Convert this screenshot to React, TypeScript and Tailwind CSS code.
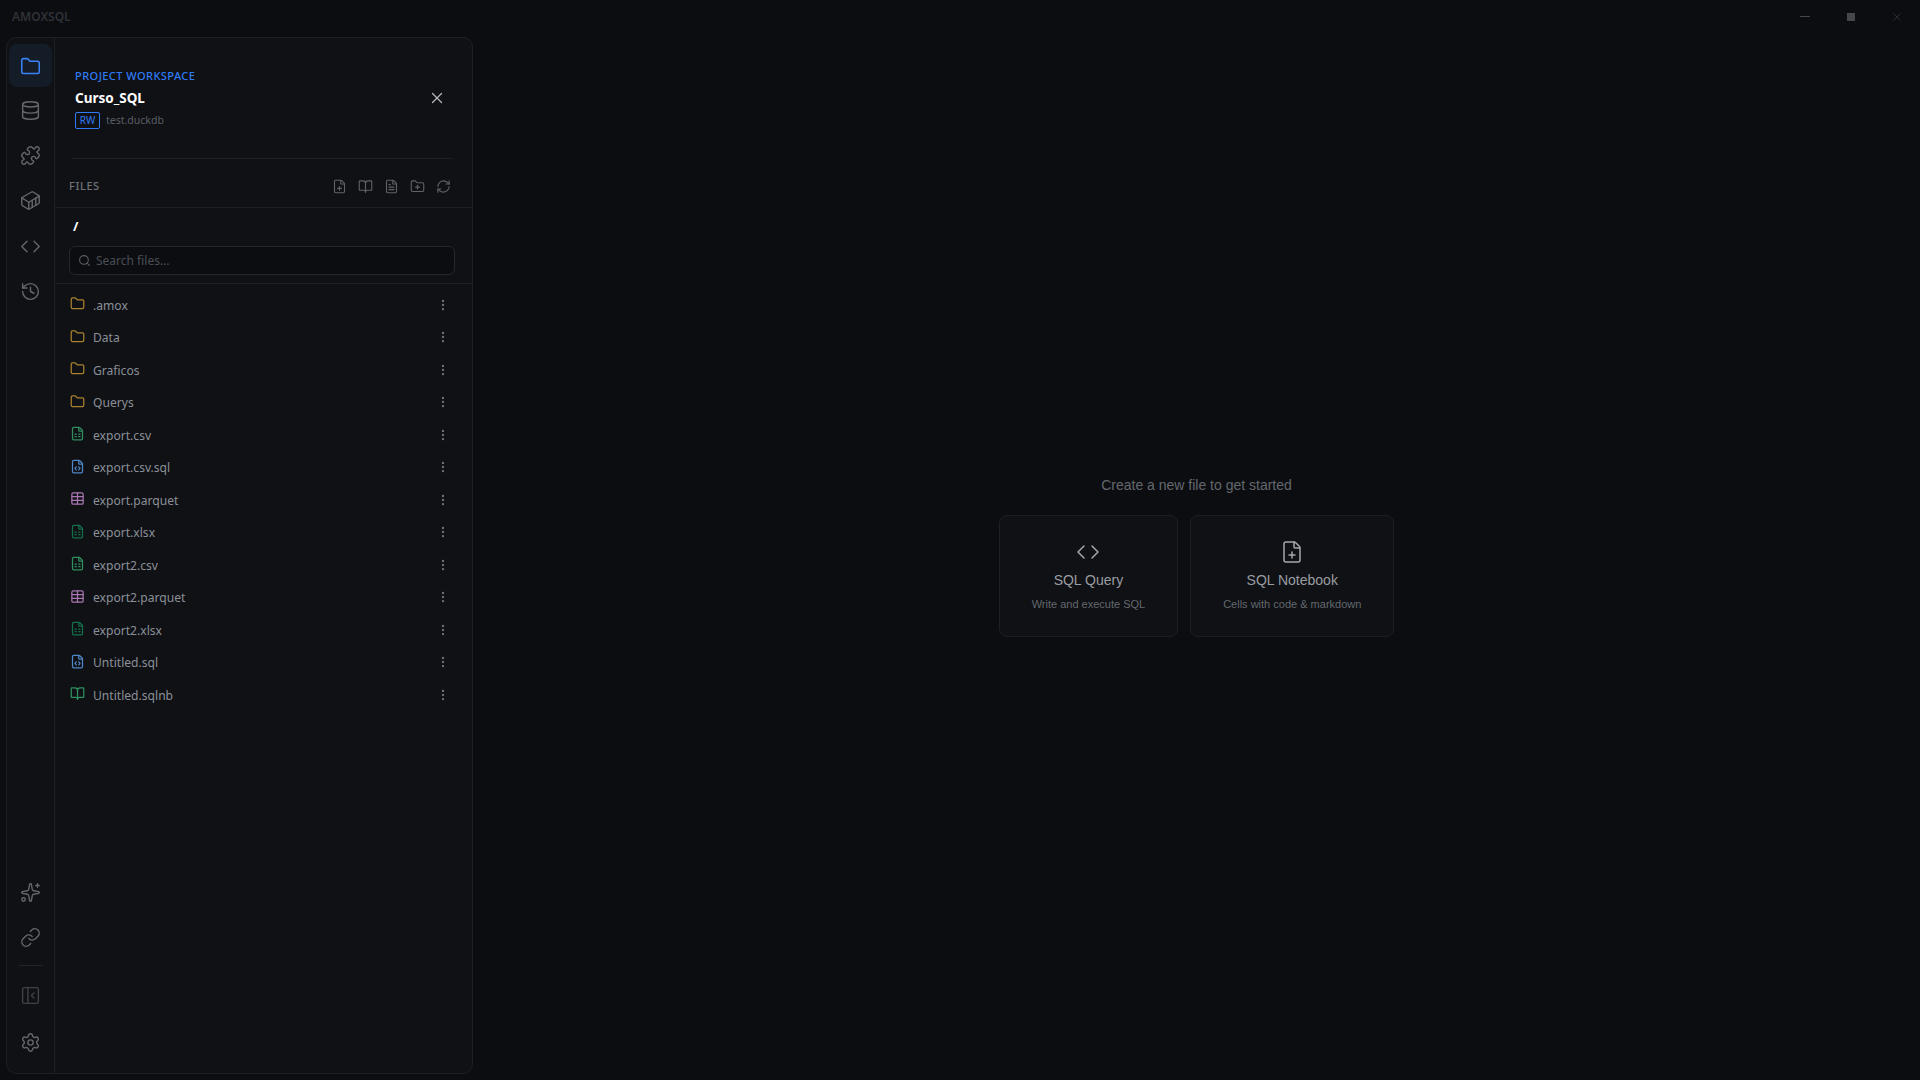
import React from 'react';
import {
  BookOpen,
  Code,
  Container,
  Database,
  FileCode,
  FilePlus,
  FileSpreadsheet,
  FileText,
  Folder,
  FolderPlus,
  History,
  Link,
  MoreVertical,
  PanelLeftClose,
  Puzzle,
  RefreshCw,
  Search,
  Settings,
  Sparkles,
  Table,
  X
} from 'lucide-react';

const files = [
  { name: '.amox', icon: Folder, color: 'text-[#a9812f]' },
  { name: 'Data', icon: Folder, color: 'text-[#a9812f]' },
  { name: 'Graficos', icon: Folder, color: 'text-[#a9812f]' },
  { name: 'Querys', icon: Folder, color: 'text-[#a9812f]' },
  { name: 'export.csv', icon: FileSpreadsheet, color: 'text-[#2f8f5f]' },
  { name: 'export.csv.sql', icon: FileCode, color: 'text-[#4f86c6]' },
  { name: 'export.parquet', icon: Table, color: 'text-[#a876b0]' },
  { name: 'export.xlsx', icon: FileSpreadsheet, color: 'text-[#14704a]' },
  { name: 'export2.csv', icon: FileSpreadsheet, color: 'text-[#2f8f5f]' },
  { name: 'export2.parquet', icon: Table, color: 'text-[#a876b0]' },
  { name: 'export2.xlsx', icon: FileSpreadsheet, color: 'text-[#14704a]' },
  { name: 'Untitled.sql', icon: FileCode, color: 'text-[#4f86c6]' },
  { name: 'Untitled.sqlnb', icon: BookOpen, color: 'text-[#2f8f5f]' }
];

const topRail = [Database, Puzzle, Container, Code, History];

export default function App() {
  return (
    <div className="flex h-[1080px] w-[1920px] flex-col overflow-hidden bg-[#0b0d11] font-['Noto_Sans',sans-serif] text-[#8b9098]">
      {/* Title bar */}
      <div className="flex h-[37px] shrink-0 items-center justify-between pb-[4px] pl-3">
        <span className="text-xs font-semibold text-[#2f3237]">AMOXSQL</span>
        <div className="flex items-center">
          <span className="flex w-[46px] justify-center"><span className="h-px w-[10px] bg-[#44474c]" /></span>
          <span className="flex w-[46px] justify-center"><span className="h-2 w-2 bg-[#44474c]" /></span>
          <span className="flex w-[46px] justify-center text-[#44474c]"><X size={14} strokeWidth={1} /></span>
        </div>
      </div>

      <div className="flex min-h-0 flex-1 pb-[6px] pl-[6px]">
        {/* Left panel */}
        <aside className="flex w-[467px] shrink-0 rounded-[10px] border border-[#1c1f24] bg-[#0f1115]">
          {/* Icon rail */}
          <div className="flex w-[48px] shrink-0 flex-col items-center border-r border-[#1c1f24] pt-[6px] pb-[8px] text-[#64686d]">
            <button className="flex h-[43px] w-[43px] items-center justify-center rounded-lg bg-[#141c28] pt-px text-[#3b82f6]">
              <Folder size={21} strokeWidth={1.75} />
            </button>
            <div className="mt-[1px] flex flex-col items-center">
              {topRail.map((Icon, idx) =>
                <button key={idx} className="flex h-[45.2px] w-[43px] items-center justify-center">
                  <Icon size={21} strokeWidth={1.6} />
                </button>
              )}
            </div>
            <div className="mt-auto flex flex-col items-center">
              <button className="flex h-[45px] w-[43px] items-center justify-center"><Sparkles size={21} strokeWidth={1.6} /></button>
              <button className="flex h-[45px] w-[43px] items-center justify-center"><Link size={21} strokeWidth={1.6} /></button>
              <div className="mt-[4.5px] mb-[7.5px] h-px w-6 bg-[#22252a]" />
              <button className="flex h-[45px] w-[43px] items-center justify-center text-[#3f4247]"><PanelLeftClose size={21} strokeWidth={1.6} /></button>
              <button className="mt-[2px] flex h-[45px] w-[43px] items-center justify-center"><Settings size={21} strokeWidth={1.6} /></button>
            </div>
          </div>

          {/* Files panel */}
          <div className="flex min-w-0 flex-1 flex-col">
            {/* Project header */}
            <div className="ml-[16px] mr-[19px] h-[121px] shrink-0 border-b border-[#1c1f24] px-1 pt-[30px]">
              <div className="text-[11px] leading-[16px] font-medium tracking-[0.45px] text-[#2f7bf6]">PROJECT WORKSPACE</div>
              <div className="mt-[4px] flex items-center justify-between pr-[3px]">
                <span className="text-[13.5px] leading-[20px] font-bold text-white">Curso_SQL</span>
                <X size={18} strokeWidth={1.75} className="text-[#b4b7bb]" />
              </div>
              <div className="mt-[4px] flex items-center gap-[6px]">
                <span className="flex h-[17px] w-[25px] items-center justify-center rounded-[2px] border border-[#2f7bf6] text-[10px] text-[#2f7bf6]">RW</span>
                <span className="text-[10.5px] text-[#5a5e64]">test.duckdb</span>
              </div>
            </div>

            {/* Files toolbar */}
            <div className="flex h-[49px] shrink-0 items-center justify-between border-b border-[#1c1f24] pt-[7px] pr-[21px] pl-[14px]">
              <span className="text-[11px] font-medium tracking-[0.6px] text-[#6f7378]">FILES</span>
              <div className="flex items-center gap-[11px] text-[#5f6368]">
                <FilePlus size={15} strokeWidth={1.75} />
                <BookOpen size={15} strokeWidth={1.75} />
                <FileText size={15} strokeWidth={1.75} />
                <FolderPlus size={15} strokeWidth={1.75} />
                <RefreshCw size={15} strokeWidth={1.75} />
              </div>
            </div>

            {/* Path and search */}
            <div className="h-[76px] shrink-0 border-b border-[#1c1f24] px-[14px] pt-[8px]">
              <div className="pl-[4px] text-[13px] leading-[20px] font-bold text-white">/</div>
              <div className="mt-[10px] flex h-[29px] w-[386px] items-center gap-[5px] rounded-md border border-[#24272c] bg-[#0b0d11] pl-2">
                <Search size={13} className="text-[#5a5e64]" />
                <span className="text-xs text-[#4a4e54]">Search files...</span>
              </div>
            </div>

            {/* File list */}
            <div className="flex flex-col pt-[5.5px]">
              {files.map((file) => {
                const Icon = file.icon;
                return (
                  <div key={file.name} className="flex h-[32.5px] items-center pr-[22px] pl-[14.5px]">
                    <Icon size={15} className={`mb-[4px] ${file.color}`} />
                    <span className="ml-[8.5px] flex-1 text-[12.1px] text-[#8b9098]">{file.name}</span>
                    <MoreVertical size={14} className="mb-[2px] text-[#6f7378]" />
                  </div>
                );
              })}
            </div>
          </div>
        </aside>

        {/* Empty editor */}
        <main className="flex min-w-0 flex-1 flex-col items-center justify-center pt-[1px]">
          <p className="mb-[20px] font-['Liberation_Sans',sans-serif] text-sm text-[#64686d]">Create a new file to get started</p>
          <div className="flex gap-[12px] font-['Liberation_Sans',sans-serif]">
            <button className="flex h-[122px] flex-col items-center rounded-lg border border-[#1c1f24] bg-[#0f1115] px-8 pt-[24px]">
              <Code size={24} strokeWidth={1.5} className="text-[#a4a7ab]" />
              <span className="mt-[6px] text-sm text-[#9a9da2]">SQL Query</span>
              <span className="mt-[6px] text-[11px] text-[#64686d]">Write and execute SQL</span>
            </button>
            <button className="flex h-[122px] flex-col items-center rounded-lg border border-[#1c1f24] bg-[#0f1115] px-8 pt-[24px]">
              <FilePlus size={24} strokeWidth={1.5} className="text-[#a4a7ab]" />
              <span className="mt-[6px] text-sm text-[#9a9da2]">SQL Notebook</span>
              <span className="mt-[6px] text-[11px] text-[#64686d]">Cells with code &amp; markdown</span>
            </button>
          </div>
        </main>
      </div>
    </div>
  );
}
